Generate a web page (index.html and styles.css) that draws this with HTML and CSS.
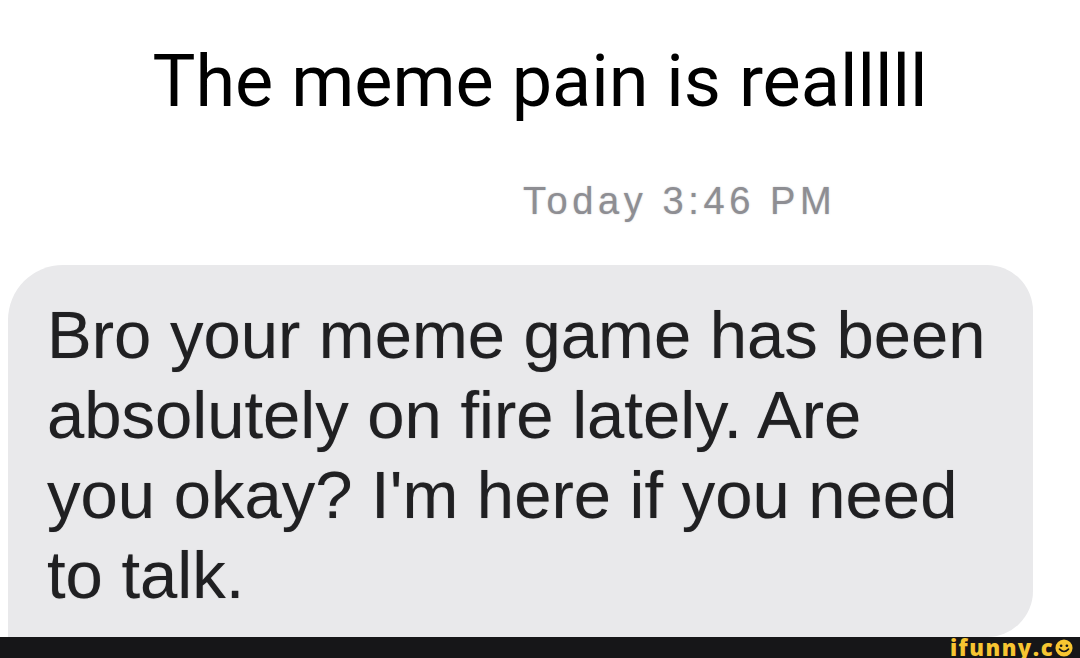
FILE: index.html
```html
<!DOCTYPE html>
<html>
<head>
<meta charset="utf-8">
<link rel="stylesheet" href="styles.css">
</head>
<body>
<div class="page">
  <h1 class="title">The meme pain is realllll</h1>
  <div class="chat">
    <div class="stamp">Today 3:46 PM</div>
    <div class="bubble">
      <p class="msg">Bro your meme game has been<br>absolutely on fire lately. Are<br>you okay? I'm here if you need<br>to talk.</p>
    </div>
  </div>
  <div class="footer">
    <div class="brand">
      <span class="brand-text">ifunny.c</span>
      <svg class="smiley" viewBox="0 0 20 20" width="18" height="18">
        <circle cx="10" cy="10" r="9.5" fill="#f7c531"/>
        <circle cx="6.8" cy="7.5" r="1.5" fill="#161618"/>
        <circle cx="13.2" cy="7.5" r="1.5" fill="#161618"/>
        <path d="M5 11.2 Q10 16.5 15 11.2" stroke="#161618" stroke-width="1.8" fill="none" stroke-linecap="round"/>
      </svg>
    </div>
  </div>
</div>
</body>
</html>
```

FILE: styles.css
```css
* { box-sizing: border-box; }
html, body { margin: 0; padding: 0; background: #ffffff; }
.page {
  width: 1080px;
  height: 658px;
  display: flex;
  flex-direction: column;
  overflow: hidden;
}
.title {
  margin: 0;
  height: 160px;
  padding-top: 40px;
  font-family: Roboto, "Liberation Sans", sans-serif;
  font-weight: 400;
  font-size: 72px;
  line-height: 84px;
  color: #000;
  text-align: center;
  letter-spacing: 0;
}
.chat {
  flex: 1;
  display: flex;
  flex-direction: column;
  overflow: hidden;
  background: #ffffff;
}
.stamp {
  margin-top: 16px;
  padding-left: 523px;
  font-family: "Liberation Sans", Arial, sans-serif;
  font-size: 38px;
  line-height: 50px;
  letter-spacing: 4.6px;
  color: #8e8e93;
  text-shadow: 0 0 1.5px rgba(142,142,147,0.6);
}
.bubble {
  margin-top: 39px;
  margin-left: 8px;
  width: 1025px;
  flex: 1;
  background: #e9e9eb;
  border-radius: 55px 46px 46px 0;
  padding: 30px 0 0 39px;
}
.msg {
  margin: 0;
  font-family: "Liberation Sans", Arial, sans-serif;
  font-size: 67px;
  line-height: 80px;
  color: #202022;
  white-space: nowrap;
  text-shadow: 0 0 1px rgba(0,0,0,0.35);
}
.footer {
  height: 21px;
  background: #161618;
  display: flex;
  justify-content: flex-end;
  align-items: center;
  overflow: hidden;
}
.brand {
  display: flex;
  align-items: center;
  gap: 1px;
  padding-right: 7px;
}
.brand-text {
  font-family: "Open Sans", "Liberation Sans", sans-serif;
  font-weight: 800;
  font-size: 22px;
  line-height: 21px;
  color: #f7c531;
  letter-spacing: 1.5px;
}
.smiley {
  display: block;
}
```
